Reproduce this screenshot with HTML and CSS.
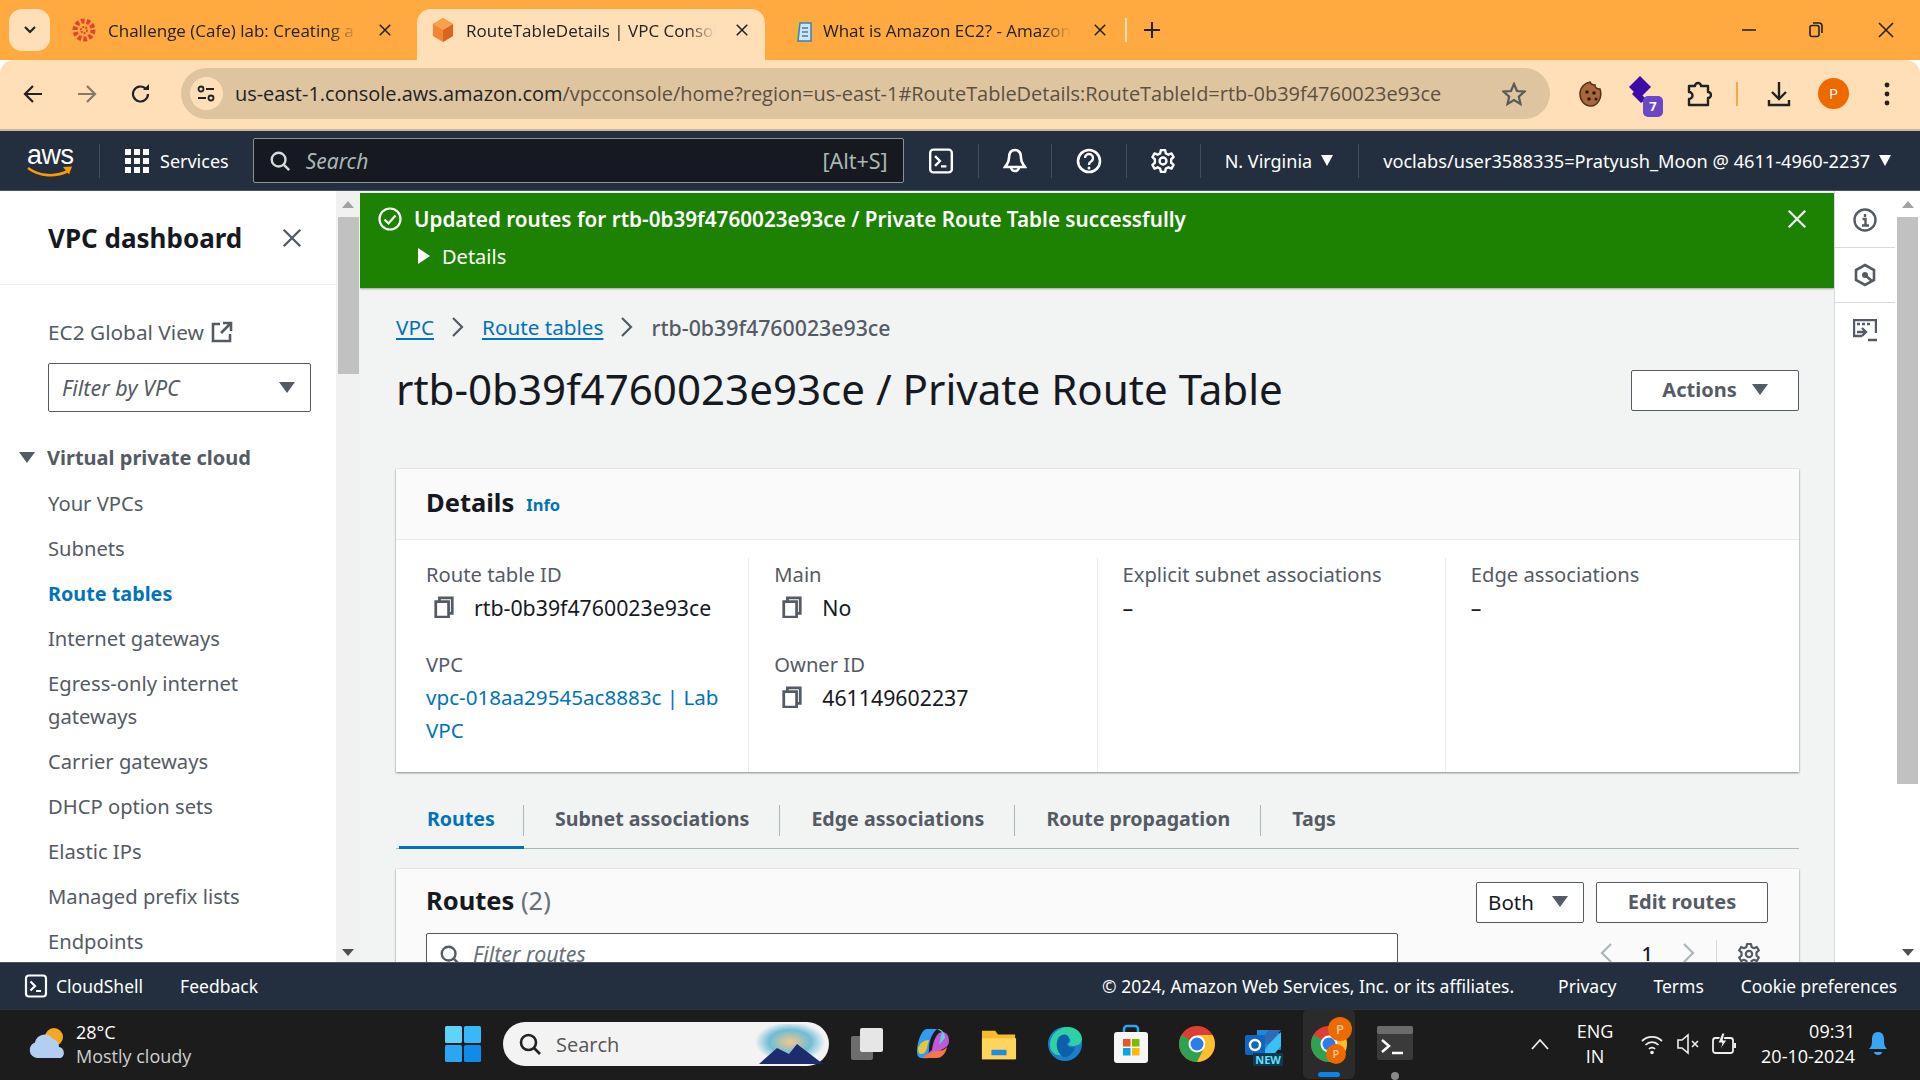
FILE: index.html
```html
<!DOCTYPE html>
<html lang="en">
<head>
<meta charset="utf-8">
<title>RouteTableDetails | VPC Console</title>
<link rel="stylesheet" href="styles.css">
</head>
<body>
<svg class="defs" width="0" height="0">
  <symbol id="copy" viewBox="0 0 24 24"><path d="M7 6V2h14v17h-4M3 6h14v17H3z" fill="none" stroke="currentColor" stroke-width="3"/></symbol>
  <symbol id="shell" viewBox="0 0 24 24"><rect x="2" y="1.5" width="20" height="21" rx="3" fill="none" stroke="currentColor" stroke-width="2.2"/><path d="M6.5 7.5l4.5 4.5-4.5 4.5M12 17h5" fill="none" stroke="currentColor" stroke-width="2.2"/></symbol>
  <symbol id="gear" viewBox="0 0 24 24"><path d="M10 2h4l.6 3 2.4 1.2 2.8-1.2 2 3.4-2.3 2v3.200l2.300 2-2 3.400-2.800-1.200L14.600 19 14 22h-4l-.6-3L7 17.800l-2.800 1.200-2-3.400 2.300-2v-3.200l-2.300-2 2-3.400L7 6.200 9.400 5z" fill="none" stroke="currentColor" stroke-width="2.200" stroke-linejoin="round"/><circle cx="12" cy="12" r="3.200" fill="none" stroke="currentColor" stroke-width="2.200"/></symbol>
  <symbol id="search" viewBox="0 0 24 24"><circle cx="10.500" cy="10.500" r="7.500" fill="none" stroke="currentColor" stroke-width="2.600"/><path d="M16 16l6 6" stroke="currentColor" stroke-width="2.600"/></symbol>
  <symbol id="x" viewBox="0 0 24 24"><path d="M3 3l18 18M21 3L3 21" stroke="currentColor" stroke-width="2.600" fill="none"/></symbol>
</svg>

<header class="tabbar">
  <div class="tab-menu"><svg width="14" height="10" viewBox="0 0 14 10"><path d="M2 2l5 5 5-5" fill="none" stroke="#222" stroke-width="2.200"/></svg></div>
  <div class="tab tab-one">
    <svg class="fav" width="26" height="26" viewBox="0 0 26 26"><circle cx="13" cy="13" r="9" fill="none" stroke="#e4432d" stroke-width="5" stroke-dasharray="3.500 2.100"/><circle cx="13" cy="13" r="3" fill="none" stroke="#e4432d" stroke-width="2" stroke-dasharray="2 1"/></svg>
    <span class="tab-title">Challenge (Cafe) lab: Creating a</span>
    <svg class="tab-x" width="14" height="14"><use href="#x"/></svg>
  </div>
  <div class="tab tab-active">
    <svg class="fav" width="26" height="26" viewBox="0 0 26 26"><path d="M13 1l10 6v12l-10 6-10-6V7z" fill="#f58536"/><path d="M13 13l10-6v12l-10 6z" fill="#d9661f"/><path d="M13 1l10 6-10 6L3 7z" fill="#f9a04c"/></svg>
    <span class="tab-title">RouteTableDetails | VPC Console</span>
    <svg class="tab-x" width="14" height="14"><use href="#x"/></svg>
  </div>
  <div class="tab tab-three">
    <svg class="fav" width="24" height="26" viewBox="0 0 24 26"><path d="M4 6l9-4v20l-9 2z" fill="#e9b53b"/><path d="M10 6h11v18H8z" fill="#cfe6f7" stroke="#3b7fc4" stroke-width="1.500"/><path d="M12 11h6M12 15h6M12 19h6" stroke="#3b7fc4" stroke-width="1.500"/></svg>
    <span class="tab-title">What is Amazon EC2? - Amazon</span>
    <svg class="tab-x" width="14" height="14"><use href="#x"/></svg>
  </div>
  <div class="tab-sep"></div>
  <svg class="tab-plus" width="16" height="16" viewBox="0 0 16 16"><path d="M8 0v16M0 8h16" stroke="#222" stroke-width="2"/></svg>
  <div class="win-controls">
    <svg width="14" height="14" viewBox="0 0 14 14"><path d="M0 7h14" stroke="#222" stroke-width="1.600"/></svg>
    <svg width="14" height="16" viewBox="0 0 14 16"><rect x="1" y="3.500" width="9" height="11" rx="2" fill="none" stroke="#222" stroke-width="1.600"/><path d="M4 1h6a3 3 0 0 1 3 3v7" fill="none" stroke="#222" stroke-width="1.600"/></svg>
    <svg class="win-close" width="16" height="16" viewBox="0 0 16 16"><path d="M1 1l14 14M15 1L1 15" stroke="#222" stroke-width="1.600"/></svg>
  </div>
</header>

<div class="toolbar">
  <svg class="tool-back" width="20" height="20" viewBox="0 0 20 20"><path d="M19 10H3M10 2l-8 8 8 8" fill="none" stroke="#222" stroke-width="2.200"/></svg>
  <svg class="tool-fwd" width="20" height="20" viewBox="0 0 20 20"><path d="M1 10h16M10 2l8 8-8 8" fill="none" stroke="#85796a" stroke-width="2.200"/></svg>
  <svg class="tool-reload" width="20" height="20" viewBox="0 0 20 20"><path d="M17 10a7.500 7.500 0 1 1-2.500-5.600" fill="none" stroke="#222" stroke-width="2.200"/><path d="M12 6h6V0z" fill="#222"/></svg>
  <div class="omnibox">
    <span class="omni-chip"><svg width="18" height="18" viewBox="0 0 18 18"><circle cx="4" cy="4" r="2.500" fill="none" stroke="#222" stroke-width="1.800"/><path d="M9 4h8M1 13h8" stroke="#222" stroke-width="1.800"/><circle cx="14" cy="13" r="2.500" fill="none" stroke="#222" stroke-width="1.800"/></svg></span>
    <span class="omni-url"><span class="omni-host">us-east-1.console.aws.amazon.com</span>/vpcconsole/home?region=us-east-1#RouteTableDetails:RouteTableId=rtb-0b39f4760023e93ce</span>
    <svg width="24" height="24" viewBox="0 0 24 24"><path d="M12 2l3 7 7.500.6-5.700 5 1.700 7.400-6.500-4-6.500 4 1.700-7.400-5.700-5L9 9z" fill="none" stroke="#5a5a5a" stroke-width="2.200"/></svg>
  </div>
  <svg class="ext ext-cookie" width="26" height="28" viewBox="0 0 26 28"><path d="M12 2c1 3 3 3 5 3 0 3 2 4 5 4 3 9-3 17-9 17C6 26 2 20 2 14 2 7 7 3 12 2z" fill="#a8683a" stroke="#53321b" stroke-width="1.500"/><circle cx="9" cy="12" r="1.800" fill="#2c1a0e"/><circle cx="16" cy="13" r="1.800" fill="#2c1a0e"/><circle cx="11" cy="19" r="1.800" fill="#2c1a0e"/><circle cx="18" cy="19" r="1.500" fill="#2c1a0e"/></svg>
  <div class="ext ext-badge">
    <svg width="30" height="34" viewBox="0 0 30 34"><path d="M12 1l11 11-11 11L1 12z" fill="#3d0ca8"/><path d="M8 14l10 10-5 4-9-9z" fill="#3d0ca8"/></svg>
    <span class="badge">7</span>
  </div>
  <svg class="ext ext-puzzle" width="26" height="28" viewBox="0 0 26 28"><path d="M3 6h6a3 3 0 0 1 6 0h7v6a3 3 0 0 1 0 6v7H3v-6a3 3 0 0 0 0-7z" fill="none" stroke="#222" stroke-width="2.400" stroke-linejoin="round"/></svg>
  <div class="tool-sep"></div>
  <svg class="ext ext-dl" width="24" height="26" viewBox="0 0 24 26"><path d="M12 1v17M5 11l7 7 7-7M2 19v5h20v-5" fill="none" stroke="#222" stroke-width="2.400"/></svg>
  <span class="avatar">P</span>
  <svg class="ext ext-dots" width="6" height="24" viewBox="0 0 6 24"><circle cx="3" cy="3" r="2.400" fill="#222"/><circle cx="3" cy="12" r="2.400" fill="#222"/><circle cx="3" cy="21" r="2.400" fill="#222"/></svg>
</div>

<nav class="awsnav">
  <div class="aws-logo"><span class="aws-word">aws</span><svg width="46" height="12" viewBox="0 0 46 12"><path d="M1 2c12 9 28 9 40 3" fill="none" stroke="#f90" stroke-width="2.600"/><path d="M36 1l9-.5-3 8z" fill="#f90"/></svg></div>
  <div class="nav-div nav-div-logo"></div>
  <svg class="grid-icon" width="24" height="24" viewBox="0 0 24 24"><g fill="#fff"><rect width="6" height="6"/><rect x="9" width="6" height="6"/><rect x="18" width="6" height="6"/><rect y="9" width="6" height="6"/><rect x="9" y="9" width="6" height="6"/><rect x="18" y="9" width="6" height="6"/><rect y="18" width="6" height="6"/><rect x="9" y="18" width="6" height="6"/><rect x="18" y="18" width="6" height="6"/></g></svg>
  <span class="nav-services">Services</span>
  <div class="nav-search">
    <svg class="ic-search" width="22" height="22"><use href="#search"/></svg>
    <span class="nav-search-text">Search</span>
    <span class="nav-search-key">[Alt+S]</span>
  </div>
  <svg class="nav-shell" width="26" height="26"><use href="#shell"/></svg>
  <div class="nav-div nav-div-a"></div>
  <svg class="nav-ic" width="24" height="26" viewBox="0 0 24 26"><path d="M12 2c-5 0-6 4-6 8 0 5-2 6-4 9h20c-2-3-4-4-4-9 0-4-1-8-6-8zM8 19a4 4 0 0 0 8 0" fill="none" stroke="#fff" stroke-width="2.600"/></svg>
  <div class="nav-div"></div>
  <svg class="nav-ic" width="26" height="26" viewBox="0 0 26 26"><circle cx="13" cy="13" r="11" fill="none" stroke="#fff" stroke-width="2.600"/><path d="M9 10a4 4 0 1 1 6 3.500c-1.500.8-2 1.500-2 3.500" fill="none" stroke="#fff" stroke-width="2.400"/><circle cx="13" cy="20" r="1.500" fill="#fff"/></svg>
  <div class="nav-div"></div>
  <svg class="nav-ic nav-gear" width="26" height="26"><use href="#gear"/></svg>
  <div class="nav-div"></div>
  <span class="nav-region">N. Virginia</span><i class="caret caret-white"></i>
  <div class="nav-div nav-div-user"></div>
  <span class="nav-user">voclabs/user3588335=Pratyush_Moon @ 4611-4960-2237</span><i class="caret caret-white"></i>
</nav>

<div class="app">
  <aside class="sidebar">
    <div class="side-head">
      <span class="side-title">VPC dashboard</span>
      <svg class="side-x" width="22" height="22"><use href="#x"/></svg>
    </div>
    <div class="side-body">
      <div class="side-global">EC2 Global View
        <svg width="22" height="22" viewBox="0 0 22 22"><path d="M9 3H2v17h17v-7M12 2h8v8M20 2L10 12" fill="none" stroke="currentColor" stroke-width="2.600"/></svg>
      </div>
      <div class="side-filter"><em>Filter by VPC</em><i class="caret caret-grey"></i></div>
      <div class="side-section"><i class="caret caret-grey"></i>Virtual private cloud</div>
      <ul class="side-list">
        <li>Your VPCs</li>
        <li>Subnets</li>
        <li class="is-active">Route tables</li>
        <li>Internet gateways</li>
        <li class="is-double">Egress-only internet gateways</li>
        <li>Carrier gateways</li>
        <li>DHCP option sets</li>
        <li>Elastic IPs</li>
        <li>Managed prefix lists</li>
        <li>Endpoints</li>
      </ul>
    </div>
  </aside>
  <div class="scrollbar scrollbar-side">
    <i class="sb-up"></i><div class="sb-thumb sb-thumb-side"></div><i class="sb-down"></i>
  </div>

  <main class="content">
    <div class="flash">
      <div class="flash-row">
        <svg width="24" height="24" viewBox="0 0 24 24"><circle cx="12" cy="12" r="10.500" fill="none" stroke="#fff" stroke-width="2.200"/><path d="M6.500 12.500l4 4 7-8" fill="none" stroke="#fff" stroke-width="2.200"/></svg>
        <strong>Updated routes for rtb-0b39f4760023e93ce / Private Route Table successfully</strong>
        <svg class="flash-x" width="22" height="22"><use href="#x"/></svg>
      </div>
      <div class="flash-details"><i class="tri-right"></i>Details</div>
    </div>

    <div class="page">
      <div class="crumbs">
        <a>VPC</a><svg width="14" height="22" viewBox="0 0 14 22"><path d="M2 2l9 9-9 9" fill="none" stroke="#545b64" stroke-width="2.200"/></svg>
        <a>Route tables</a><svg width="14" height="22" viewBox="0 0 14 22"><path d="M2 2l9 9-9 9" fill="none" stroke="#545b64" stroke-width="2.200"/></svg>
        <span>rtb-0b39f4760023e93ce</span>
      </div>
      <div class="page-head">
        <h1>rtb-0b39f4760023e93ce / Private Route Table</h1>
        <button class="btn btn-actions">Actions<i class="caret caret-grey"></i></button>
      </div>

      <section class="card card-details">
        <div class="card-head"><h2>Details</h2><a class="info">Info</a></div>
        <div class="detail-grid">
          <div class="detail-col">
            <div class="field"><div class="label">Route table ID</div><div class="value"><svg width="22" height="22"><use href="#copy"/></svg>rtb-0b39f4760023e93ce</div></div>
            <div class="field"><div class="label">VPC</div><a class="value-link">vpc-018aa29545ac8883c | Lab VPC</a></div>
          </div>
          <div class="detail-col">
            <div class="field"><div class="label">Main</div><div class="value"><svg width="22" height="22"><use href="#copy"/></svg>No</div></div>
            <div class="field"><div class="label">Owner ID</div><div class="value"><svg width="22" height="22"><use href="#copy"/></svg>461149602237</div></div>
          </div>
          <div class="detail-col">
            <div class="field"><div class="label">Explicit subnet associations</div><div class="value value-plain">–</div></div>
          </div>
          <div class="detail-col">
            <div class="field"><div class="label">Edge associations</div><div class="value value-plain">–</div></div>
          </div>
        </div>
      </section>

      <div class="tabs">
        <span class="t t-active">Routes</span>
        <span class="t">Subnet associations</span>
        <span class="t">Edge associations</span>
        <span class="t">Route propagation</span>
        <span class="t t-last">Tags</span>
      </div>

      <section class="card routes">
        <div class="routes-top">
          <h2>Routes <span class="count">(2)</span></h2>
          <div class="routes-btns">
            <button class="btn btn-both">Both<i class="caret caret-grey"></i></button>
            <button class="btn btn-edit">Edit routes</button>
          </div>
        </div>
        <div class="routes-filter">
          <div class="filter-input"><svg width="22" height="22"><use href="#search"/></svg><em>Filter routes</em></div>
          <div class="pager">
            <svg width="14" height="22" viewBox="0 0 14 22"><path d="M12 2l-9 9 9 9" fill="none" stroke="#aab7b8" stroke-width="2.200"/></svg>
            <b>1</b>
            <svg width="14" height="22" viewBox="0 0 14 22"><path d="M2 2l9 9-9 9" fill="none" stroke="#aab7b8" stroke-width="2.200"/></svg>
            <span class="pager-div"></span>
            <svg width="24" height="24"><use href="#gear"/></svg>
          </div>
        </div>
      </section>
    </div>
  </main>

  <aside class="rail">
    <div class="rail-cell"><svg width="24" height="24" viewBox="0 0 24 24"><circle cx="12" cy="12" r="10.500" fill="none" stroke="currentColor" stroke-width="2.400"/><path d="M12 6v3M9.500 11H12.500v6M9 17.500h7" fill="none" stroke="currentColor" stroke-width="2.400"/></svg></div>
    <div class="rail-cell"><svg width="24" height="24" viewBox="0 0 24 24"><path d="M12 2l9 5v10l-9 5-9-5V7z" fill="none" stroke="currentColor" stroke-width="2.600"/><circle cx="12" cy="12" r="3" fill="currentColor"/><path d="M13 13l6 5" stroke="currentColor" stroke-width="2.600"/></svg></div>
    <div class="rail-cell rail-last"><svg width="24" height="24" viewBox="0 0 24 24"><path d="M9 17H1V1h22v13" fill="none" stroke="currentColor" stroke-width="2.400"/><path d="M4 5h3M9 5h3M14 5h3" stroke="currentColor" stroke-width="2.400"/><path d="M4 13h9M9 9l4 4-4 4M15 21h9" fill="none" stroke="currentColor" stroke-width="2.400"/></svg></div>
  </aside>
  <div class="scrollbar scrollbar-main">
    <i class="sb-up"></i><div class="sb-thumb sb-thumb-main"></div><i class="sb-down"></i>
  </div>
</div>

<footer class="consolefoot">
  <svg width="24" height="24"><use href="#shell"/></svg>
  <span class="foot-shell">CloudShell</span>
  <span class="foot-feedback">Feedback</span>
  <span class="foot-copy">© 2024, Amazon Web Services, Inc. or its affiliates.</span>
  <span class="foot-link foot-first">Privacy</span>
  <span class="foot-link">Terms</span>
  <span class="foot-link foot-cookie">Cookie preferences</span>
</footer>

<div class="taskbar">
  <svg class="tb-weather" width="40" height="36" viewBox="0 0 40 36"><circle cx="27" cy="11" r="9" fill="#f5a623"/><path d="M10 32a8 8 0 0 1-2-15.500A10 10 0 0 1 26 13a8 8 0 0 1 6 8 6 6 0 0 1 2 11z" fill="#b4cdf2"/></svg>
  <div class="tb-weather-text"><span>28°C</span><span class="tb-muted">Mostly cloudy</span></div>
  <svg class="tb-win" width="36" height="36" viewBox="0 0 36 36"><rect width="17" height="17" rx="1.500" fill="#5ed4fb"/><rect x="19" width="17" height="17" rx="1.500" fill="#3ab7f8"/><rect y="19" width="17" height="17" rx="1.500" fill="#2aa6f5"/><rect x="19" y="19" width="17" height="17" rx="1.500" fill="#0f8bea"/></svg>
  <div class="tb-search">
    <svg width="24" height="24"><use href="#search"/></svg>
    <span>Search</span>
    <svg class="tb-search-art" width="70" height="40" viewBox="0 0 70 40"><defs><radialGradient id="glow"><stop offset="0" stop-color="#f3c98a"/><stop offset=".6" stop-color="#6fbcd6"/><stop offset="1" stop-color="#f3f3f3"/></radialGradient></defs><ellipse cx="35" cy="18" rx="35" ry="20" fill="url(#glow)"/><path d="M4 40l18-16 12 6 8-10 26 20z" fill="#1c2c6c"/></svg>
  </div>
  <div class="tb-apps">
    <svg width="36" height="36" viewBox="0 0 36 36"><rect x="2" y="10" width="22" height="24" rx="2" fill="#6d6d6d"/><rect x="11" y="2" width="23" height="24" rx="2" fill="#e6e6e6"/></svg>
    <svg width="36" height="36" viewBox="0 0 36 36"><path d="M12 3h10c-5 4-8 12-8 20 0 5-2 9-7 9-3 0-5-2-5-6 0-8 4-23 10-23z" fill="#2f9df4"/><path d="M7 32c6 1 15-1 19-8 4-2 8-4 8-9 0-6-3-9-7-9-5 0-9 9-10 18z" fill="#c05ad8"/><path d="M22 3c6 0 8 5 8 9l-6 7 3-13z" fill="#5bd2d5"/><path d="M7 32h15c5 0 9-5 10-11-3 3-6 4-10 4-5 0-9 3-15 7z" fill="#f2774a"/><path d="M3 22c2-5 6-8 11-8l-2 8c-1 4-3 6-6 6-2 0-3-2-3-6z" fill="#e9c53c"/></svg>
    <svg width="36" height="36" viewBox="0 0 38 36"><path d="M1 4h14l3 4h18v26H1z" fill="#f4bb2a"/><path d="M1 12h36v22H1z" fill="#ffd45c"/><rect x="11" y="24" width="16" height="6" rx="1" fill="#1f8ee0"/></svg>
    <svg width="36" height="38" viewBox="0 0 36 38"><circle cx="18" cy="19" r="17" fill="#1a7fc9"/><path d="M3 20C3 9 12 2 21 2c8 0 14 6 14 12 0 5-5 7-9 7-3 0-5-1-5-2 2-1 3-3 2-5-2-3-7-2-9 1-3 5 1 11 6 14-11 4-17-2-17-9z" fill="#2ed0a5"/><path d="M12 12c4-4 9-3 10 1 1 3-1 5-2 6 0 3 4 4 8 3-1 6-7 11-11 10C11 30 7 19 12 12z" fill="#0e5fa9"/></svg>
    <svg width="36" height="40" viewBox="0 0 36 40"><path d="M11 8V5a3 3 0 0 1 3-3h8a3 3 0 0 1 3 3v3" fill="none" stroke="#2aa6f5" stroke-width="2.500"/><rect x="1" y="8" width="34" height="31" rx="3" fill="#f6f6f6"/><rect x="10" y="15" width="7.500" height="7.500" fill="#f25022"/><rect x="19" y="15" width="7.500" height="7.500" fill="#7fba00"/><rect x="10" y="24" width="7.500" height="7.500" fill="#00a4ef"/><rect x="19" y="24" width="7.500" height="7.500" fill="#ffb900"/></svg>
    <svg width="36" height="36" viewBox="0 0 36 36"><circle cx="18" cy="18" r="18" fill="#de3e33"/><path d="M18 18L2.500 9A18 18 0 0 0 18 36l9-18z" fill="#2fa14f"/><path d="M18 9h15.500A18 18 0 0 1 18 36l9-18z" fill="#fbc02d"/><circle cx="18" cy="18" r="8.500" fill="#fff"/><circle cx="18" cy="18" r="6.500" fill="#2b7de9"/></svg>
    <div class="tb-outlook">
      <svg width="36" height="36" viewBox="0 0 36 36"><path d="M12 4h12l12 4v16H12z" fill="#1e88d9"/><path d="M24 4l12 0-12 14H12z" fill="#2f6bb4"/><path d="M24 18l12-12v14L26 32H14z" fill="#37c2f3"/><rect y="9" width="20" height="20" rx="2" fill="#0f66c0"/><circle cx="10" cy="19" r="5" fill="none" stroke="#fff" stroke-width="2.500"/></svg>
      <span class="new-tag">NEW</span>
    </div>
    <div class="tb-active">
      <svg width="36" height="36" viewBox="0 0 36 36"><circle cx="18" cy="18" r="18" fill="#de3e33"/><path d="M18 18L2.500 9A18 18 0 0 0 18 36l9-18z" fill="#2fa14f"/><path d="M18 9h15.500A18 18 0 0 1 18 36l9-18z" fill="#fbc02d"/><circle cx="18" cy="18" r="8.500" fill="#fff"/><circle cx="18" cy="18" r="6.500" fill="#2b7de9"/></svg>
      <span class="tb-p tb-p-big">P</span>
      <span class="tb-p tb-p-small">P</span>
      <i class="tb-underline"></i>
    </div>
    <div class="tb-term">
      <svg width="36" height="34" viewBox="0 0 36 34"><rect width="36" height="34" rx="2" fill="#3a3a3a"/><rect width="36" height="8" rx="2" fill="#6b6b6b"/><path d="M5 14l7 6-7 6" fill="none" stroke="#fff" stroke-width="2.500"/><path d="M15 27h11" stroke="#fff" stroke-width="2.500"/></svg>
      <i class="tb-dot"></i>
    </div>
  </div>
  <div class="tb-tray">
    <svg width="18" height="12" viewBox="0 0 18 12"><path d="M1 11l8-9 8 9" fill="none" stroke="#eee" stroke-width="1.800"/></svg>
    <div class="tb-lang"><span>ENG</span><span>IN</span></div>
    <svg class="tb-wifi" width="24" height="22" viewBox="0 0 24 22"><path d="M2 8a14 14 0 0 1 20 0M5.500 12a9 9 0 0 1 13 0M9 16a4 4 0 0 1 6 0" fill="none" stroke="#eee" stroke-width="1.800"/><circle cx="12" cy="19.500" r="1.800" fill="#eee"/></svg>
    <svg class="tb-tray-ic" width="24" height="22" viewBox="0 0 24 22"><path d="M2 7v8h4l6 5V2L6 7z" fill="none" stroke="#eee" stroke-width="1.600"/><path d="M16 8l6 6M22 8l-6 6" stroke="#eee" stroke-width="1.600"/></svg>
    <svg class="tb-tray-ic" width="26" height="24" viewBox="0 0 26 24"><rect x="1" y="6" width="20" height="15" rx="2.500" fill="none" stroke="#eee" stroke-width="1.800"/><path d="M23 11v5" stroke="#eee" stroke-width="2"/><path d="M10 1l-4 10h4l-2 7 7-10h-4l2-7z" fill="#eee" stroke="#1c1c1c"/></svg>
    <div class="tb-clock"><span>09:31</span><span>20-10-2024</span></div>
    <svg class="tb-bell" width="20" height="26" viewBox="0 0 20 26"><path d="M10 1c-5 0-6 4-6 8 0 5-1 7-3 9h18c-2-2-3-4-3-9 0-4-1-8-6-8z" fill="#37a7f5"/><path d="M6 21h8c0 4-8 4-8 0z" fill="#37a7f5"/></svg>
  </div>
</div>
</body>
</html>
```

FILE: styles.css
```css
* { box-sizing: border-box; }
html, body { margin: 0; padding: 0; }
body {
  width: 1920px;
  height: 1080px;
  overflow: hidden;
  display: flex;
  flex-direction: column;
  font-family: "Noto Sans", "Open Sans", sans-serif;
  color: #16191f;
  background: #fff;
}
.defs { position: absolute; }
h1, h2 { margin: 0; font-weight: 400; }
ul { margin: 0; padding: 0; list-style: none; }
i { display: block; font-style: normal; }
button { font-family: inherit; }

/* carets */
.caret {
  width: 0; height: 0;
  border-left: 8px solid transparent;
  border-right: 8px solid transparent;
  border-top: 11px solid #545b64;
  flex: none;
}
.caret-white { border-left-width: 6px; border-right-width: 6px; border-top: 11px solid #fff; }

/* tab strip */
.tabbar {
  height: 60px;
  flex: none;
  background: #ffaa40;
  display: flex;
  align-items: flex-start;
  padding: 9px 0 0 9px;
  font-family: "Open Sans", sans-serif;
  font-size: 17px;
  color: #222;
}
.tab-menu {
  width: 41px; height: 42px;
  border-radius: 13px;
  background: #ffdfb8;
  display: flex; align-items: center; justify-content: center;
}
.tab {
  height: 51px;
  display: flex;
  align-items: center;
  padding-bottom: 9px;
}
.tab-title {
  overflow: hidden;
  white-space: nowrap;
  -webkit-mask-image: linear-gradient(90deg, #000 88%, transparent);
  mask-image: linear-gradient(90deg, #000 88%, transparent);
}
.tab-x { color: #222; flex: none; }
.tab-one { width: 367px; padding-left: 21px; }
.tab-one .fav { margin-right: 11px; }
.tab-one .tab-title { width: 250px; margin-right: 20px; }
.tab-active {
  width: 348px;
  background: #ffdfb8;
  border-radius: 14px 14px 0 0;
  padding-left: 13px;
}
.tab-active .fav { margin-right: 10px; }
.tab-active .tab-title { width: 250px; margin-right: 19px; }
.tab-three { width: 361px; padding-left: 25px; }
.tab-three .fav { margin-right: 9px; }
.tab-three .tab-title { width: 248px; margin-right: 22px; }
.tab-sep { width: 2px; height: 24px; margin: 9px 0 0 -1px; background: #ffdfb8; }
.tab-plus { margin: 13px 0 0 17px; }
.win-controls {
  margin-left: auto;
  display: flex;
  align-items: center;
  gap: 53px;
  padding: 13px 26px 0 0;
}
.win-close { margin-left: 2px; }

/* toolbar */
.toolbar {
  height: 71px;
  flex: none;
  background: #ffdfb8;
  border-bottom: 2px solid #c9b69c;
  border-radius: 14px 14px 0 0;
  display: flex;
  align-items: center;
  padding: 0 30px 2px 23px;
  font-family: "Open Sans", sans-serif;
}
.tool-fwd { margin-left: 34px; }
.tool-reload { margin-left: 34px; }
.omnibox {
  margin-left: 30px;
  width: 1370px;
  height: 51px;
  border-radius: 26px;
  background: #dfc4a0;
  display: flex;
  align-items: center;
  padding: 0 24px 0 9px;
}
.omni-chip {
  width: 33px; height: 33px;
  border-radius: 50%;
  background: #ffdfb8;
  display: flex; align-items: center; justify-content: center;
  flex: none;
}
.omni-url {
  margin-left: 12px;
  flex: 1;
  font-size: 19.950px;
  white-space: nowrap;
  overflow: hidden;
  color: #5c5041;
}
.omni-host { color: #222; }
.ext { flex: none; }
.ext-cookie { margin-left: 28px; }
.ext-badge { margin-left: 24px; position: relative; width: 34px; height: 38px; }
.badge {
  position: absolute;
  right: -1px; bottom: -4px;
  width: 20px; height: 21px;
  border-radius: 5px;
  background: #6a46c9;
  color: #fff;
  font-size: 13px;
  font-weight: 700;
  text-align: center;
  line-height: 21px;
}
.ext-puzzle { margin-left: 24px; }
.tool-sep { width: 2px; height: 24px; background: #f0a94e; margin-left: 24px; }
.ext-dl { margin-left: 29px; }
.avatar {
  width: 31px; height: 31px;
  border-radius: 50%;
  background: #ee6a00;
  color: #fff;
  font-size: 15px;
  text-align: center;
  line-height: 31px;
  margin-left: 27px;
  flex: none;
}
.ext-dots { margin-left: 35px; }

/* aws nav */
.awsnav {
  height: 60px;
  flex: none;
  background: #232f3e;
  border-bottom: 1px solid #4a5563;
  display: flex;
  align-items: center;
  color: #fff;
  font-size: 18px;
  padding-left: 27px;
}
.aws-logo { width: 46px; display: flex; flex-direction: column; align-items: flex-start; }
.aws-word { font-family: "Liberation Sans", sans-serif; font-size: 27px; line-height: 22px; height: 22px; letter-spacing: -.5px; }
.nav-div { width: 1px; height: 34px; background: #414d5c; margin: 0 24px; flex: none; }
.nav-div-logo { margin: 0 25px 0 26px; }
.nav-services { margin-left: 11px; white-space: nowrap; }
.nav-search {
  margin-left: 24px;
  width: 651px;
  height: 45px;
  background: #16191f;
  border: 1px solid #879596;
  border-radius: 2px;
  display: flex;
  align-items: center;
  padding: 0 15px;
  color: #aab7b8;
  flex: none;
}
.ic-search { color: #d5dbdb; }
.nav-search-text { margin-left: 15px; font-style: italic; font-size: 21px; }
.nav-search-key { margin-left: auto; font-size: 21.500px; }
.nav-shell { margin-left: 24px; color: #fff; flex: none; }
.nav-div-a { margin: 0 24px 0 24px; }
.nav-ic { flex: none; }
.nav-gear { color: #fff; margin-left: -1px; }
.nav-region { white-space: nowrap; }
.nav-region + .caret { margin-left: 9px; }
.nav-div-user { margin: 0 24px 0 25px; }
.nav-user { white-space: nowrap; font-size: 18.200px; }
.nav-user + .caret { margin-left: 9px; }

/* main area */
.app {
  height: 771px;
  flex: none;
  display: flex;
  overflow: hidden;
  background: #fff;
}
.sidebar { width: 336px; flex: none; color: #545b64; font-size: 20.200px; }
.side-head {
  height: 94px;
  border-bottom: 1px solid #eaeded;
  display: flex;
  align-items: center;
  padding: 0 33px 0 48px;
  justify-content: space-between;
}
.side-title { font-size: 26px; font-weight: 700; color: #16191f; }
.side-x { color: #545b64; }
.side-body { padding: 28px 0 0 48px; }
.side-global { display: flex; align-items: center; gap: 7px; height: 37px; font-size: 20.800px; }
.side-filter {
  width: 263px; height: 49px;
  margin-top: 13px;
  border: 1px solid #545b64;
  border-radius: 2px;
  display: flex;
  align-items: center;
  justify-content: space-between;
  padding: 0 15px 0 13px;
  font-size: 21.500px;
}
.side-section {
  display: flex;
  align-items: center;
  gap: 12px;
  margin: 27px 0 0 -29px;
  height: 37px;
  font-weight: 700;
  font-size: 20px;
  white-space: nowrap;
}
.side-list { margin-top: 5px; }
.side-list li { min-height: 45px; line-height: 45px; white-space: nowrap; }
.side-list .is-double { white-space: normal; width: 230px; line-height: 33px; padding: 6px 0; min-height: 78px; }
.side-list .is-active { color: #0073bb; font-weight: 700; font-size: 19.800px; }

/* scrollbars */
.scrollbar {
  width: 24px;
  flex: none;
  background: #f1f1f1;
  display: flex;
  flex-direction: column;
  align-items: center;
  padding-top: 10px;
}
.scrollbar-main { width: 25px; background: #fff; }
.sb-up { width: 0; height: 0; border: 6px solid transparent; border-top: 0; border-bottom: 7px solid #a3a3a3; flex: none; }
.sb-down { width: 0; height: 0; border: 6px solid transparent; border-bottom: 0; border-top: 7px solid #505050; flex: none; margin-top: auto; margin-bottom: 6px; }
.sb-thumb { width: 21px; background: #c1c1c1; margin-top: 9px; flex: none; }
.sb-thumb-side { height: 157px; }
.sb-thumb-main { height: 567px; }

/* content */
.content {
  width: 1475px;
  flex: none;
  background: #f2f3f3;
  padding-top: 2px;
  overflow: hidden;
  border-right: 1px solid #d5dbdb;
}
.flash {
  height: 95px;
  background: #1d8102;
  color: #fff;
  font-size: 20px;
  padding: 11px 26px 0 18px;
  box-shadow: 0 1px 2px rgba(0,0,0,.35);
}
.flash-row { display: flex; align-items: center; gap: 12px; height: 30px; }
.flash-row strong { font-weight: 600; font-size: 20.700px; }
.flash-x { margin-left: auto; color: #eaeded; }
.flash-details { display: flex; align-items: center; gap: 12px; height: 43px; margin-left: 40px; padding-top: 1px; }
.tri-right { width: 0; height: 0; border-top: 8px solid transparent; border-bottom: 8px solid transparent; border-left: 12px solid #fff; }
.page { padding: 0 35px 0 36px; }
.crumbs {
  display: flex;
  align-items: center;
  height: 40px;
  margin-top: 19px;
  font-size: 20.700px;
  gap: 17px;
  color: #545b64;
}
.crumbs a { color: #0073bb; text-decoration: underline; text-underline-offset: 3px; }
.crumbs span { font-weight: 500; font-size: 21.300px; }
.page-head {
  display: flex;
  align-items: center;
  justify-content: space-between;
  height: 60px;
  margin-top: 13px;
}
h1 { font-size: 42.100px; white-space: nowrap; margin-top: -3px; }
.btn {
  height: 41px;
  border: 1px solid #545b64;
  border-radius: 2px;
  background: #fff;
  color: #545b64;
  font-size: 20px;
  font-weight: 700;
  display: flex;
  align-items: center;
  justify-content: center;
  padding: 0 0 2px;
}
.btn-actions { width: 168px; gap: 15px; }
.card {
  background: #fff;
  box-shadow: 0 1px 2px rgba(0,28,36,.45), 0 0 1px rgba(0,28,36,.18);
}
.card-head {
  height: 71px;
  background: #fafafa;
  border-bottom: 1px solid #eaeded;
  display: flex;
  align-items: center;
  padding-left: 30px;
  gap: 12px;
}
.card-details { margin-top: 49px; }
h2 { font-size: 25.500px; font-weight: 700; }
.card-head h2 { margin-top: -5px; }
.info { color: #0073bb; font-size: 16.500px; font-weight: 700; padding-top: 1px; }
.detail-grid {
  height: 232px;
  display: grid;
  grid-template-columns: repeat(4, 1fr);
  padding: 18px 5px 25px 5px;
}
.detail-col { border-right: 1px solid #eaeded; padding: 0 20px 0 25px; }
.detail-col:first-child { padding-right: 18px; }
.detail-col:last-child { border-right: 0; }
.field { margin-bottom: 25px; font-size: 20.200px; line-height: 33px; }
.label { color: #545b64; }
.value { display: flex; align-items: center; gap: 19px; height: 32px; padding-left: 7px; font-size: 21.300px; }
.value svg { color: #545b64; flex: none; }
.value-plain { padding-left: 0; color: #16191f; }
.value-link { color: #0073bb; display: block; font-size: 20.600px; }
.tabs {
  height: 59px;
  margin-top: 18px;
  border-bottom: 1px solid #aab7b8;
  display: flex;
  align-items: flex-start;
  font-size: 19.600px;
  font-weight: 700;
  color: #545b64;
  padding-left: 3px;
}
.t {
  height: 59px;
  padding: 15px 31px 0;
  position: relative;
  white-space: nowrap;
}
.t::after {
  content: "";
  position: absolute;
  right: 0; top: 15px;
  width: 1px; height: 31px;
  background: #aab7b8;
}
.t-last::after { display: none; }
.t-active { color: #0073bb; border-bottom: 3px solid #0073bb; padding: 15px 29px 0 28px; }
.routes { margin-top: 20px; background: #fafafa; height: 120px; }
.routes-top {
  display: flex;
  justify-content: space-between;
  align-items: center;
  height: 41px;
  padding: 13px 31px 0 30px;
  box-sizing: content-box;
}
.routes-top h2 { margin-top: -6px; }
.count { font-weight: 400; color: #687078; }
.routes-btns { display: flex; gap: 12px; }
.btn-both { width: 108px; gap: 18px; font-weight: 400; color: #16191f; font-size: 20.500px; padding-right: 4px; }
.btn-edit { width: 172px; }
.routes-filter { display: flex; margin-top: 10px; padding: 0 38px 0 30px; justify-content: space-between; }
.filter-input {
  width: 972px;
  height: 60px;
  background: #fff;
  border: 1px solid #545b64;
  border-radius: 2px;
  display: flex;
  gap: 12px;
  padding: 5px 0 0 12px;
  font-size: 21.400px;
  color: #687078;
}
.filter-input svg { color: #545b64; margin-top: 5px; }
.pager { display: flex; gap: 29px; align-items: flex-start; padding-top: 7px; font-size: 20px; color: #545b64; }
.pager b { font-weight: 500; color: #16191f; }
.pager svg { margin-top: 2px; }
.pager-div { width: 1px; height: 40px; background: #d5dbdb; margin-left: -9px; margin-right: -9px; }

/* right rail */
.rail { width: 60px; flex: none; padding-top: 2px; color: #545b64; }
.rail-cell { height: 55px; border-bottom: 1px solid #d5dbdb; display: flex; align-items: center; justify-content: center; }
.rail-last { border-bottom: 0; }

/* console footer */
.consolefoot {
  height: 47px;
  flex: none;
  background: #232f3e;
  border-top: 1px solid #4a5563;
  color: #fff;
  font-size: 17.500px;
  display: flex;
  align-items: center;
  padding: 0 23px 0 24px;
}
.foot-shell { margin-left: 8px; }
.foot-feedback { margin-left: 37px; margin-right: auto; }
.foot-link { margin-left: 37px; }
.foot-first { margin-left: 44px; }
.foot-cookie { font-size: 17.300px; }

/* windows taskbar */
.taskbar {
  height: 71px;
  flex: none;
  background: #1c1c1c;
  border-top: 1px solid #333;
  color: #fff;
  font-family: "Open Sans", sans-serif;
  font-size: 18px;
  display: flex;
  align-items: center;
  padding: 0 0 2px 27px;
}
.tb-weather { flex: none; }
.tb-weather-text { display: flex; flex-direction: column; margin-left: 9px; line-height: 24px; width: 369px; margin-top: -1px; }
.tb-muted { color: #cfcfcf; }
.tb-win { flex: none; }
.tb-search {
  margin-left: 22px;
  width: 326px; height: 44px;
  border-radius: 22px;
  background: #f3f3f3;
  color: #555;
  display: flex;
  align-items: center;
  padding: 0 4px 0 15px;
  font-size: 20px;
  gap: 14px;
  flex: none;
}
.tb-search svg { color: #222; }
.tb-search-art { margin-left: auto; }
.tb-apps { display: flex; align-items: center; margin-left: 20px; gap: 30px; }
.tb-apps > svg { flex: none; }
.tb-outlook { position: relative; width: 36px; height: 36px; }
.new-tag { position: absolute; right: -2px; bottom: -4px; background: #103a52; color: #5fe0ff; font-size: 11px; font-weight: 700; line-height: 13px; padding: 0 2px; }
.tb-active { position: relative; width: 36px; height: 36px; }
.tb-active::before {
  content: "";
  position: absolute;
  inset: -17px -8px -17px -8px;
  background: #2b2b2b;
  border-radius: 6px;
  z-index: 0;
}
.tb-active svg { position: relative; }
.tb-p { position: absolute; border-radius: 50%; background: #ee6a00; color: #f5c99a; text-align: center; font-weight: 600; }
.tb-p-big { width: 24px; height: 24px; right: -5px; top: -9px; font-size: 13px; line-height: 24px; }
.tb-p-small { width: 20px; height: 20px; right: 1px; bottom: -2px; font-size: 11px; line-height: 20px; }
.tb-underline { position: absolute; left: 7px; bottom: -15px; width: 22px; height: 5px; border-radius: 3px; background: #0a84ea; }
.tb-term { position: relative; width: 36px; height: 36px; }
.tb-dot { position: absolute; left: 14px; bottom: -18px; width: 8px; height: 8px; border-radius: 50%; background: #8a8a8a; }
.tb-tray { display: flex; align-items: center; margin-left: 118px; }
.tb-lang { display: flex; flex-direction: column; align-items: center; line-height: 25px; margin-left: 21px; width: 50px; }
.tb-wifi { margin-left: 20px; }
.tb-tray-ic { margin-left: 12px; }
.tb-clock { display: flex; flex-direction: column; align-items: flex-end; line-height: 25px; width: 113px; margin-left: 4px; }
.tb-bell { margin-left: 13px; }
```
